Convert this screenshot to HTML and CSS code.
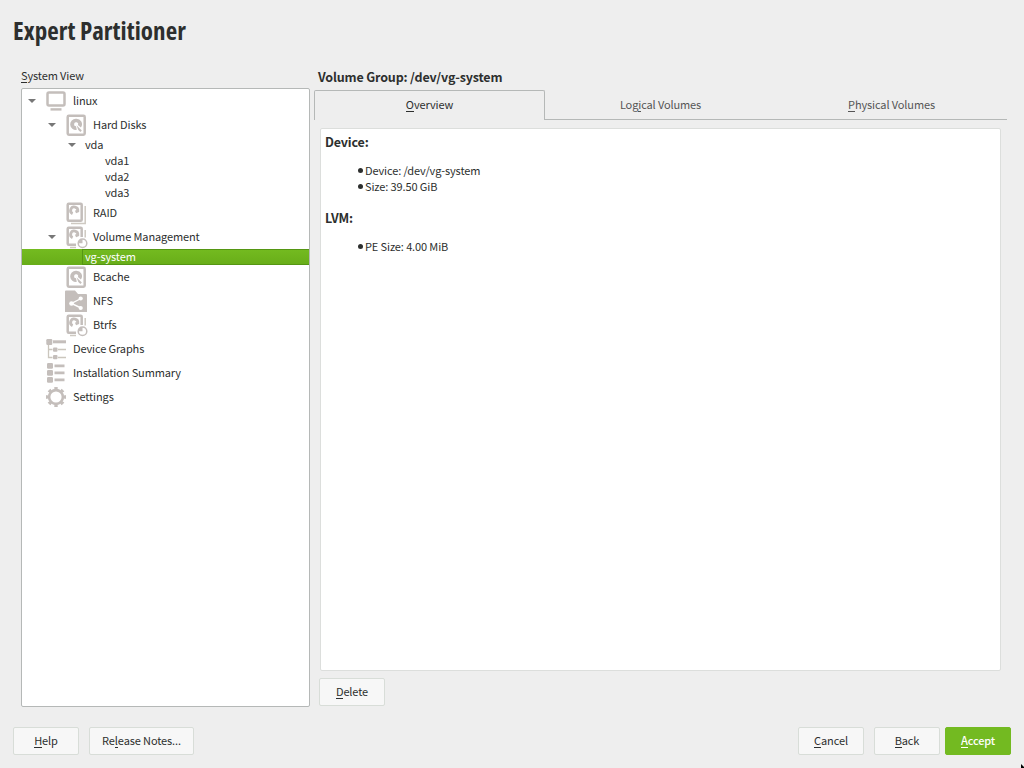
FILE: index.html
```html
<!DOCTYPE html>
<html lang="en">
<head>
<meta charset="utf-8">
<title>Expert Partitioner</title>
<link rel="stylesheet" href="styles.css">
</head>
<body>
<svg class="defs" width="0" height="0">
  <defs>
    <symbol id="screen" viewBox="0 0 24 24"><rect x="3.5" y="3.5" width="17" height="13" rx="1.5" class="line"/><path class="fill" d="M6.500 19.200h11v2.400h-11z"/></symbol>
    <symbol id="disk" viewBox="0 0 24 24"><rect x="3.700" y="2.700" width="17" height="19" rx="1.2" class="line"/><path class="fill" d="M12 5.700a5.600 5.600 0 1 0 .8 11.100l-.8-3.600a2 2 0 1 1 1.900-1.200l3 2.600A5.600 5.600 0 0 0 12 5.700z"/><path class="fill" d="M12.500 12.300l5.300 5.200-1.300 1.500-2.200-2z"/></symbol>
    <symbol id="raid" viewBox="0 0 24 24"><rect x="3.700" y="2.700" width="14" height="17" rx="1" class="line"/><path class="thin" d="M21.200 5v17.500H7"/><path class="arc" d="M8.600 12.800a3.600 3.600 0 1 1 5.200-2.800l-2.300 1"/></symbol>
    <symbol id="lvm" viewBox="0 0 24 24"><path class="line" d="M12 19.700H4.700a1 1 0 0 1-1-1v-15a1 1 0 0 1 1-1h12a1 1 0 0 1 1 1V12"/><path class="thin" d="M21.200 5v7.500M6 22.500h6"/><path class="arc" d="M8.600 12.800a3.600 3.600 0 1 1 5.200-2.800l-2.300 1"/><circle cx="18.500" cy="18.300" r="4.300" class="thin pie"/><path class="fill" d="M18.500 14v4.300h-4.300a4.300 4.300 0 0 1 4.300-4.300z"/></symbol>
    <symbol id="share" viewBox="0 0 24 24"><path class="fill" d="M1 2.500q0-1 1-1h9l3 3.500h8q1 0 1 1v17H1z"/><path class="whiteline" d="M17 9.500L7.500 14.500l9.500 4.500"/><g class="white"><circle cx="16.700" cy="9.500" r="2.100"/><circle cx="7.500" cy="14.500" r="2.300"/><circle cx="16.700" cy="19" r="2.100"/></g></symbol>
    <symbol id="graph" viewBox="0 0 24 24"><rect class="fill" x="2.300" y="2" width="6" height="6" rx="1.200"/><path class="fill" d="M9 3.300h13v3H9z"/><path class="hair" d="M4.500 8v12.500h4M4.500 12.500h4M14 12.500h8M14 20.500h8"/><rect class="fill" x="9" y="10.500" width="4.500" height="4.300" rx="1"/><rect class="fill" x="9" y="18" width="4.500" height="4.300" rx="1"/></symbol>
    <symbol id="list" viewBox="0 0 24 24"><g class="fill"><rect x="3" y="2" width="6" height="5.700" rx="1.200"/><rect x="3" y="9" width="6" height="5.700" rx="1.200"/><rect x="3" y="16" width="6" height="5.700" rx="1.200"/><path d="M10.500 3.500h10v2.700h-10zM10.500 10.500h10v2.700h-10zM10.500 17.500h10v2.700h-10z"/></g></symbol>
    <symbol id="gear" viewBox="0 0 24 24"><circle cx="12" cy="12" r="6.900" class="ring"/><circle cx="12" cy="12" r="8.600" class="teeth" pathLength="80"/></symbol>
  </defs>
</svg>
<div class="window">
  <h1>Expert Partitioner</h1>
  <main>
    <section class="side">
      <div class="label"><u>S</u>ystem View</div>
      <div class="tree">
        <div class="row l0"><i class="arrow"></i><svg><use href="#screen"/></svg><span>linux</span></div>
        <div class="row l1"><i class="arrow"></i><svg><use href="#disk"/></svg><span>Hard Disks</span></div>
        <div class="row l2 small"><i class="arrow"></i><span>vda</span></div>
        <div class="row l3 small"><span>vda1</span></div>
        <div class="row l3 small"><span>vda2</span></div>
        <div class="row l3 small"><span>vda3</span></div>
        <div class="row l1"><i class="arrow none"></i><svg><use href="#raid"/></svg><span>RAID</span></div>
        <div class="row l1"><i class="arrow"></i><svg><use href="#lvm"/></svg><span>Volume Management</span></div>
        <div class="row small selected"><span>vg-system</span></div>
        <div class="row l1"><i class="arrow none"></i><svg><use href="#disk"/></svg><span>Bcache</span></div>
        <div class="row l1"><i class="arrow none"></i><svg><use href="#share"/></svg><span>NFS</span></div>
        <div class="row l1"><i class="arrow none"></i><svg><use href="#lvm"/></svg><span>Btrfs</span></div>
        <div class="row l0"><i class="arrow none"></i><svg><use href="#graph"/></svg><span>Device Graphs</span></div>
        <div class="row l0"><i class="arrow none"></i><svg><use href="#list"/></svg><span>Installation Summary</span></div>
        <div class="row l0"><i class="arrow none"></i><svg><use href="#gear"/></svg><span>Settings</span></div>
      </div>
    </section>
    <section class="content">
      <h2>Volume Group: /dev/vg-system</h2>
      <nav>
        <div class="tab active"><span><u>O</u>verview</span></div>
        <div class="tab"><span>Log<u>i</u>cal Volumes</span></div>
        <div class="tab"><span><u>P</u>hysical Volumes</span></div>
      </nav>
      <article>
        <h3>Device:</h3>
        <ul><li>Device: /dev/vg-system</li><li>Size: 39.50 GiB</li></ul>
        <h3>LVM:</h3>
        <ul><li>PE Size: 4.00 MiB</li></ul>
      </article>
      <button class="delete"><span><u>D</u>elete</span></button>
    </section>
  </main>
  <footer>
    <button><span><u>H</u>elp</span></button>
    <button class="notes"><span>Re<u>l</u>ease Notes...</span></button>
    <button class="cancel"><span><u>C</u>ancel</span></button>
    <button class="back"><span><u>B</u>ack</span></button>
    <button class="accept"><span><u>A</u>ccept</span></button>
  </footer>
  <svg class="pointer" viewBox="0 0 4 5"><path d="M1 1l3 3v1H1z"/></svg>
</div>
</body>
</html>
```
FILE: styles.css
```css
* { box-sizing: border-box; }
body { margin: 0; background: #eee; color: #2d2f2e; font: 11px/14px "Noto Sans CJK SC", sans-serif; letter-spacing: -0.12px; }
.defs { position: absolute; }
.window { position: relative; width: 1024px; height: 768px; overflow: hidden; display: flex; flex-direction: column; }
h1 { margin: 0; height: 68px; padding: 12px 0 0 13px; font: bold 25px/36px "Open Sans", sans-serif; font-stretch: 75%; letter-spacing: 0.05px; }
h2, h3 { margin: 0; font-size: 12.5px; line-height: 18px; font-weight: bold; letter-spacing: -0.16px; }
u { text-decoration: none; border-bottom: 1px solid currentColor; display: inline-block; height: 15px; line-height: 14px; vertical-align: top; }
main { height: 659px; display: flex; padding-left: 21px; }
.side { width: 293px; }
.label { height: 20px; }
.tree { width: 289px; height: 619px; background: #fff; border: 1px solid #b5b8b7; border-radius: 2px; }
.row { height: 24px; display: flex; align-items: center; white-space: nowrap; }
.row span { padding-bottom: 2px; }
.small { height: 16px; }
.l0 { padding-left: 6px; }
.l1 { padding-left: 26px; }
.l2 { padding-left: 46px; }
.l3 { padding-left: 83px; }
.arrow { width: 8px; height: 4px; background: #777; clip-path: polygon(0 0, 100% 0, 50% 100%); flex: none; }
.none { visibility: hidden; }
.row svg { width: 24px; height: 24px; margin: 0 5px 0 8px; flex: none; }
.l2 .arrow { margin-right: 9px; }
.selected { background: linear-gradient(#74bb20, #68ad19); color: #fff; padding-left: 60px; }
.selected span { flex: 1; height: 16px; padding-left: 2px; line-height: 12px; border: 1px solid #559613; border-right: 0; }
.line { fill: none; stroke: #c4bebb; stroke-width: 2.5; }
.thin { fill: none; stroke: #cec9c1; stroke-width: 1.5; }
.pie { stroke: #c4bebb; }
.arc { fill: none; stroke: #c4bebb; stroke-width: 2.8; }
.hair { fill: none; stroke: #cbc6bd; stroke-width: 1.3; }
.fill { fill: #c4bebb; }
.white { fill: #fff; }
.whiteline { fill: none; stroke: #fff; stroke-width: 1.4; }
.ring { fill: none; stroke: #c4bebb; stroke-width: 2.6; }
.teeth { fill: none; stroke: #c4bebb; stroke-width: 2.8; stroke-dasharray: 5 5; stroke-dashoffset: 2.5; }
.content { flex: 1; }
h2 { height: 22px; padding-left: 4px; }
nav { display: flex; width: 693px; height: 30px; }
.tab { width: 231px; display: flex; justify-content: center; padding-top: 7px; border-bottom: 1px solid #b5b8b7; color: #555; }
.active { border: 1px solid #b5b8b7; border-bottom: 0; border-radius: 2px 2px 0 0; padding-top: 6px; color: #2d2f2e; }
article { margin: 8px 0 0 6px; width: 681px; height: 543px; padding: 4px 4px; background: #fff; border: 1px solid #dcdedc; border-radius: 2px; }
ul { list-style: none; margin: 12px 0 14px; padding: 0 0 0 33px; }
li { display: flex; align-items: flex-start; height: 16px; }
li::before { content: ""; width: 5px; height: 5px; margin: 5px 2px 0 0; border-radius: 50%; background: #2d2f2e; }
button { width: 66px; height: 28px; padding: 0; border: 1px solid #d8ddd8; border-radius: 2px; background: #f7f7f7; color: #2d2f2e; font: inherit; letter-spacing: inherit; }
button span { display: block; height: 16px; }
.delete { display: block; margin: 7px 0 0 5px; }
footer { display: flex; padding-left: 13px; }
.notes { width: 105px; margin-left: 10px; }
.cancel { margin-left: 604px; }
.back { margin-left: 10px; }
.accept { margin-left: 5px; color: #fff; background: #73ba21; border-color: #73ba21; font-weight: 500; }
.pointer { position: absolute; right: 0; bottom: 0; width: 4px; height: 5px; }
```
